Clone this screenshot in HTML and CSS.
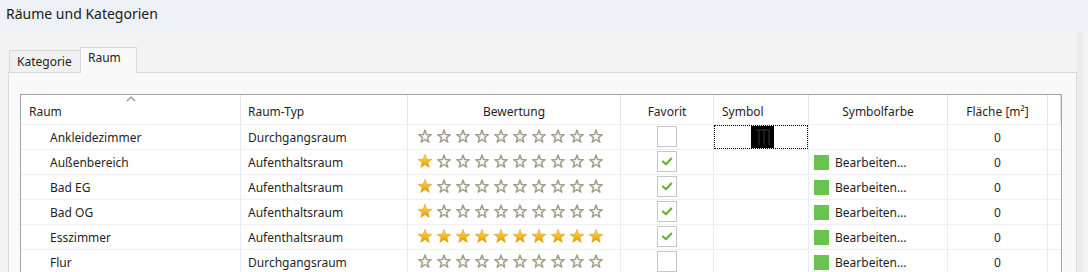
FILE: index.html
```html
<!DOCTYPE html>
<html lang="de">
<head>
<meta charset="utf-8">
<title>Räume und Kategorien</title>
<link rel="stylesheet" href="styles.css">
</head>
<body>
<svg class="defs" width="0" height="0" aria-hidden="true">
  <defs>
    <linearGradient id="gold" x1="0" y1="0" x2="0" y2="1">
      <stop offset="0" stop-color="#ffdc63"/>
      <stop offset="0.55" stop-color="#f6b81c"/>
      <stop offset="1" stop-color="#e08e06"/>
    </linearGradient>
    <symbol id="star-on" viewBox="0 0 14 14">
      <path d="M7 0.4 L8.76 5.17 L13.85 5.38 L9.85 8.53 L11.23 13.42 L7 10.6 L2.77 13.42 L4.15 8.53 L0.15 5.38 L5.24 5.17 Z" fill="url(#gold)" stroke="#d69a18" stroke-width="0.6" stroke-linejoin="round"/>
    </symbol>
    <symbol id="star-off" viewBox="0 0 14 14">
      <path d="M7 1.1 L8.55 5.6 L13.2 5.75 L9.5 8.6 L10.8 13.1 L7 10.5 L3.2 13.1 L4.5 8.6 L0.8 5.75 L5.45 5.6 Z" fill="#fbfaf6" stroke="#a39d8a" stroke-width="1.5" stroke-linejoin="round"/>
    </symbol>
    <symbol id="check" viewBox="0 0 20 20">
      <polyline points="5.5,10.5 8.8,13.6 14.8,7.2" fill="none" stroke="#62b22b" stroke-width="2.3" stroke-linecap="round" stroke-linejoin="round"/>
    </symbol>
  </defs>
</svg>
<div class="window">
  <header class="titlebar">Räume und Kategorien</header>
  <div class="content">
    <div class="tabs">
      <div class="tab">Kategorie</div>
      <div class="tab active">Raum</div>
    </div>
    <div class="panel">
      <div class="grid">
        <div class="row head">
          <div class="cell c-name">Raum<span class="sort"><svg width="10" height="6" viewBox="0 0 10 6"><polyline points="1,5 5,1 9,5" fill="none" stroke="#8a8a8a" stroke-width="1.2"/></svg></span></div>
          <div class="cell c-type">Raum-Typ</div>
          <div class="cell c-rate center">Bewertung</div>
          <div class="cell c-fav center">Favorit</div>
          <div class="cell c-sym">Symbol</div>
          <div class="cell c-col center">Symbolfarbe</div>
          <div class="cell c-area center">Fläche [m²]</div>
          <div class="cell c-fill"></div>
        </div>

        <div class="row">
          <div class="cell c-name indent">Ankleidezimmer</div>
          <div class="cell c-type">Durchgangsraum</div>
          <div class="cell c-rate"><div class="stars">
            <svg class="star"><use href="#star-off"/></svg><svg class="star"><use href="#star-off"/></svg><svg class="star"><use href="#star-off"/></svg><svg class="star"><use href="#star-off"/></svg><svg class="star"><use href="#star-off"/></svg><svg class="star"><use href="#star-off"/></svg><svg class="star"><use href="#star-off"/></svg><svg class="star"><use href="#star-off"/></svg><svg class="star"><use href="#star-off"/></svg><svg class="star"><use href="#star-off"/></svg>
          </div></div>
          <div class="cell c-fav center"><span class="box"></span></div>
          <div class="cell c-sym focus-wrap"><div class="focus"><svg class="glyph" width="23" height="22" viewBox="0 0 23 22"><rect width="23" height="22" fill="#000"/><path d="M5 4 H18 M8 4 V19 M13 4 V19 M18 4 V19" stroke="#3a3a3a" stroke-width="1" fill="none"/></svg></div></div>
          <div class="cell c-col"></div>
          <div class="cell c-area center">0</div>
          <div class="cell c-fill"></div>
        </div>

        <div class="row">
          <div class="cell c-name indent">Außenbereich</div>
          <div class="cell c-type">Aufenthaltsraum</div>
          <div class="cell c-rate"><div class="stars">
            <svg class="star"><use href="#star-on"/></svg><svg class="star"><use href="#star-off"/></svg><svg class="star"><use href="#star-off"/></svg><svg class="star"><use href="#star-off"/></svg><svg class="star"><use href="#star-off"/></svg><svg class="star"><use href="#star-off"/></svg><svg class="star"><use href="#star-off"/></svg><svg class="star"><use href="#star-off"/></svg><svg class="star"><use href="#star-off"/></svg><svg class="star"><use href="#star-off"/></svg>
          </div></div>
          <div class="cell c-fav center"><span class="box"><svg class="tick"><use href="#check"/></svg></span></div>
          <div class="cell c-sym"></div>
          <div class="cell c-col"><span class="swatch"></span>Bearbeiten…</div>
          <div class="cell c-area center">0</div>
          <div class="cell c-fill"></div>
        </div>

        <div class="row">
          <div class="cell c-name indent">Bad EG</div>
          <div class="cell c-type">Aufenthaltsraum</div>
          <div class="cell c-rate"><div class="stars">
            <svg class="star"><use href="#star-on"/></svg><svg class="star"><use href="#star-off"/></svg><svg class="star"><use href="#star-off"/></svg><svg class="star"><use href="#star-off"/></svg><svg class="star"><use href="#star-off"/></svg><svg class="star"><use href="#star-off"/></svg><svg class="star"><use href="#star-off"/></svg><svg class="star"><use href="#star-off"/></svg><svg class="star"><use href="#star-off"/></svg><svg class="star"><use href="#star-off"/></svg>
          </div></div>
          <div class="cell c-fav center"><span class="box"><svg class="tick"><use href="#check"/></svg></span></div>
          <div class="cell c-sym"></div>
          <div class="cell c-col"><span class="swatch"></span>Bearbeiten…</div>
          <div class="cell c-area center">0</div>
          <div class="cell c-fill"></div>
        </div>

        <div class="row">
          <div class="cell c-name indent">Bad OG</div>
          <div class="cell c-type">Aufenthaltsraum</div>
          <div class="cell c-rate"><div class="stars">
            <svg class="star"><use href="#star-on"/></svg><svg class="star"><use href="#star-off"/></svg><svg class="star"><use href="#star-off"/></svg><svg class="star"><use href="#star-off"/></svg><svg class="star"><use href="#star-off"/></svg><svg class="star"><use href="#star-off"/></svg><svg class="star"><use href="#star-off"/></svg><svg class="star"><use href="#star-off"/></svg><svg class="star"><use href="#star-off"/></svg><svg class="star"><use href="#star-off"/></svg>
          </div></div>
          <div class="cell c-fav center"><span class="box"><svg class="tick"><use href="#check"/></svg></span></div>
          <div class="cell c-sym"></div>
          <div class="cell c-col"><span class="swatch"></span>Bearbeiten…</div>
          <div class="cell c-area center">0</div>
          <div class="cell c-fill"></div>
        </div>

        <div class="row">
          <div class="cell c-name indent">Esszimmer</div>
          <div class="cell c-type">Aufenthaltsraum</div>
          <div class="cell c-rate"><div class="stars">
            <svg class="star"><use href="#star-on"/></svg><svg class="star"><use href="#star-on"/></svg><svg class="star"><use href="#star-on"/></svg><svg class="star"><use href="#star-on"/></svg><svg class="star"><use href="#star-on"/></svg><svg class="star"><use href="#star-on"/></svg><svg class="star"><use href="#star-on"/></svg><svg class="star"><use href="#star-on"/></svg><svg class="star"><use href="#star-on"/></svg><svg class="star"><use href="#star-on"/></svg>
          </div></div>
          <div class="cell c-fav center"><span class="box"><svg class="tick"><use href="#check"/></svg></span></div>
          <div class="cell c-sym"></div>
          <div class="cell c-col"><span class="swatch"></span>Bearbeiten…</div>
          <div class="cell c-area center">0</div>
          <div class="cell c-fill"></div>
        </div>

        <div class="row">
          <div class="cell c-name indent">Flur</div>
          <div class="cell c-type">Durchgangsraum</div>
          <div class="cell c-rate"><div class="stars">
            <svg class="star"><use href="#star-off"/></svg><svg class="star"><use href="#star-off"/></svg><svg class="star"><use href="#star-off"/></svg><svg class="star"><use href="#star-off"/></svg><svg class="star"><use href="#star-off"/></svg><svg class="star"><use href="#star-off"/></svg><svg class="star"><use href="#star-off"/></svg><svg class="star"><use href="#star-off"/></svg><svg class="star"><use href="#star-off"/></svg><svg class="star"><use href="#star-off"/></svg>
          </div></div>
          <div class="cell c-fav center"><span class="box"></span></div>
          <div class="cell c-sym"></div>
          <div class="cell c-col"><span class="swatch"></span>Bearbeiten…</div>
          <div class="cell c-area center">0</div>
          <div class="cell c-fill"></div>
        </div>
      </div>
    </div>
  </div>
</div>
</body>
</html>
```

FILE: styles.css
```css
* { box-sizing: border-box; }

html, body {
  margin: 0;
  padding: 0;
  height: 272px;
  overflow: hidden;
  background: #f3f3f3;
  font-family: "Noto Sans", "Open Sans", sans-serif;
  font-size: 12px;
  color: #1f1f1f;
}

.defs {
  display: block;
  width: 0;
  height: 0;
  overflow: hidden;
}

.window {
  display: flex;
  flex-direction: column;
  width: 1088px;
}

.titlebar {
  height: 32px;
  background: #eef1f5;
  padding: 4px 0 0 6px;
  font-size: 14px;
  line-height: 20px;
  color: #1a1a1a;
}

.content {
  padding: 14px 0 0 8px;
  background: #f3f3f3;
  border-right: 5px solid #f3f3f3;
  box-shadow: inset -6px 0 0 #ececec;
}

.tabs {
  display: flex;
  align-items: flex-end;
  padding-left: 1px;
  height: 26px;
  position: relative;
  z-index: 1;
}

.tab {
  width: 72px;
  height: 22px;
  padding: 0 0 0 7px;
  border: 1px solid #d9d9d9;
  border-bottom: none;
  background: #f0f0f0;
  line-height: 22px;
  color: #1f1f1f;
}

.tab.active {
  width: 57px;
  height: 26px;
  padding: 0 0 0 7px;
  margin-left: -1px;
  background: #f9f9f9;
  line-height: 20px;
  margin-bottom: -1px;
}

.panel {
  width: 1069px;
  height: 300px;
  border: 1px solid #dadada;
  background: #f9f9f9;
  padding: 21px 14px 0 11px;
}

.grid {
  width: 1042px;
  border: 1px solid #a3a3a3;
  background: #ffffff;
}

.row {
  display: grid;
  grid-template-columns: 220px 167px 213px 93px 95px 139px 100px 1fr;
  height: 25px;
  border-bottom: 1px solid #edf1f7;
}

.row.head {
  height: 30px;
  border-bottom: 1px solid #f1f1f1;
}

.cell {
  display: flex;
  align-items: center;
  padding-left: 7px;
  border-right: 1px solid #e6edf6;
  white-space: nowrap;
  overflow: hidden;
}

.head .cell {
  padding-top: 4px;
  border-right: 1px solid #e4e4e4;
}

.head .c-name {
  position: relative;
  padding-left: 8px;
}

.sort {
  position: absolute;
  left: 105px;
  top: 1px;
  display: flex;
}

.cell.center {
  justify-content: center;
  padding-left: 0;
}

.cell.indent {
  padding-left: 29px;
}

.head .c-sym {
  padding-left: 8px;
}

.c-fill {
  border-right: none;
}

.stars {
  display: flex;
  gap: 5px;
  padding-left: 3px;
  padding-bottom: 2px;
}

.star {
  width: 14px;
  height: 14px;
  display: block;
}

.box {
  width: 20px;
  height: 21px;
  border: 1px solid #c6c6c6;
  background: #fff;
  display: flex;
  align-items: center;
  justify-content: center;
  margin-bottom: 2px;
}

.tick {
  width: 18px;
  height: 18px;
}

.focus-wrap {
  padding-left: 0;
}

.focus {
  width: 95px;
  height: 24px;
  border: 1px dotted #000;
  display: flex;
  align-items: center;
  justify-content: center;
  margin-bottom: 1px;
  padding-left: 3px;
}

.glyph {
  display: block;
}

.c-col {
  padding-left: 5px;
}

.swatch {
  width: 15px;
  height: 15px;
  background: #68c34f;
  margin-right: 6px;
  flex: none;
}
```
